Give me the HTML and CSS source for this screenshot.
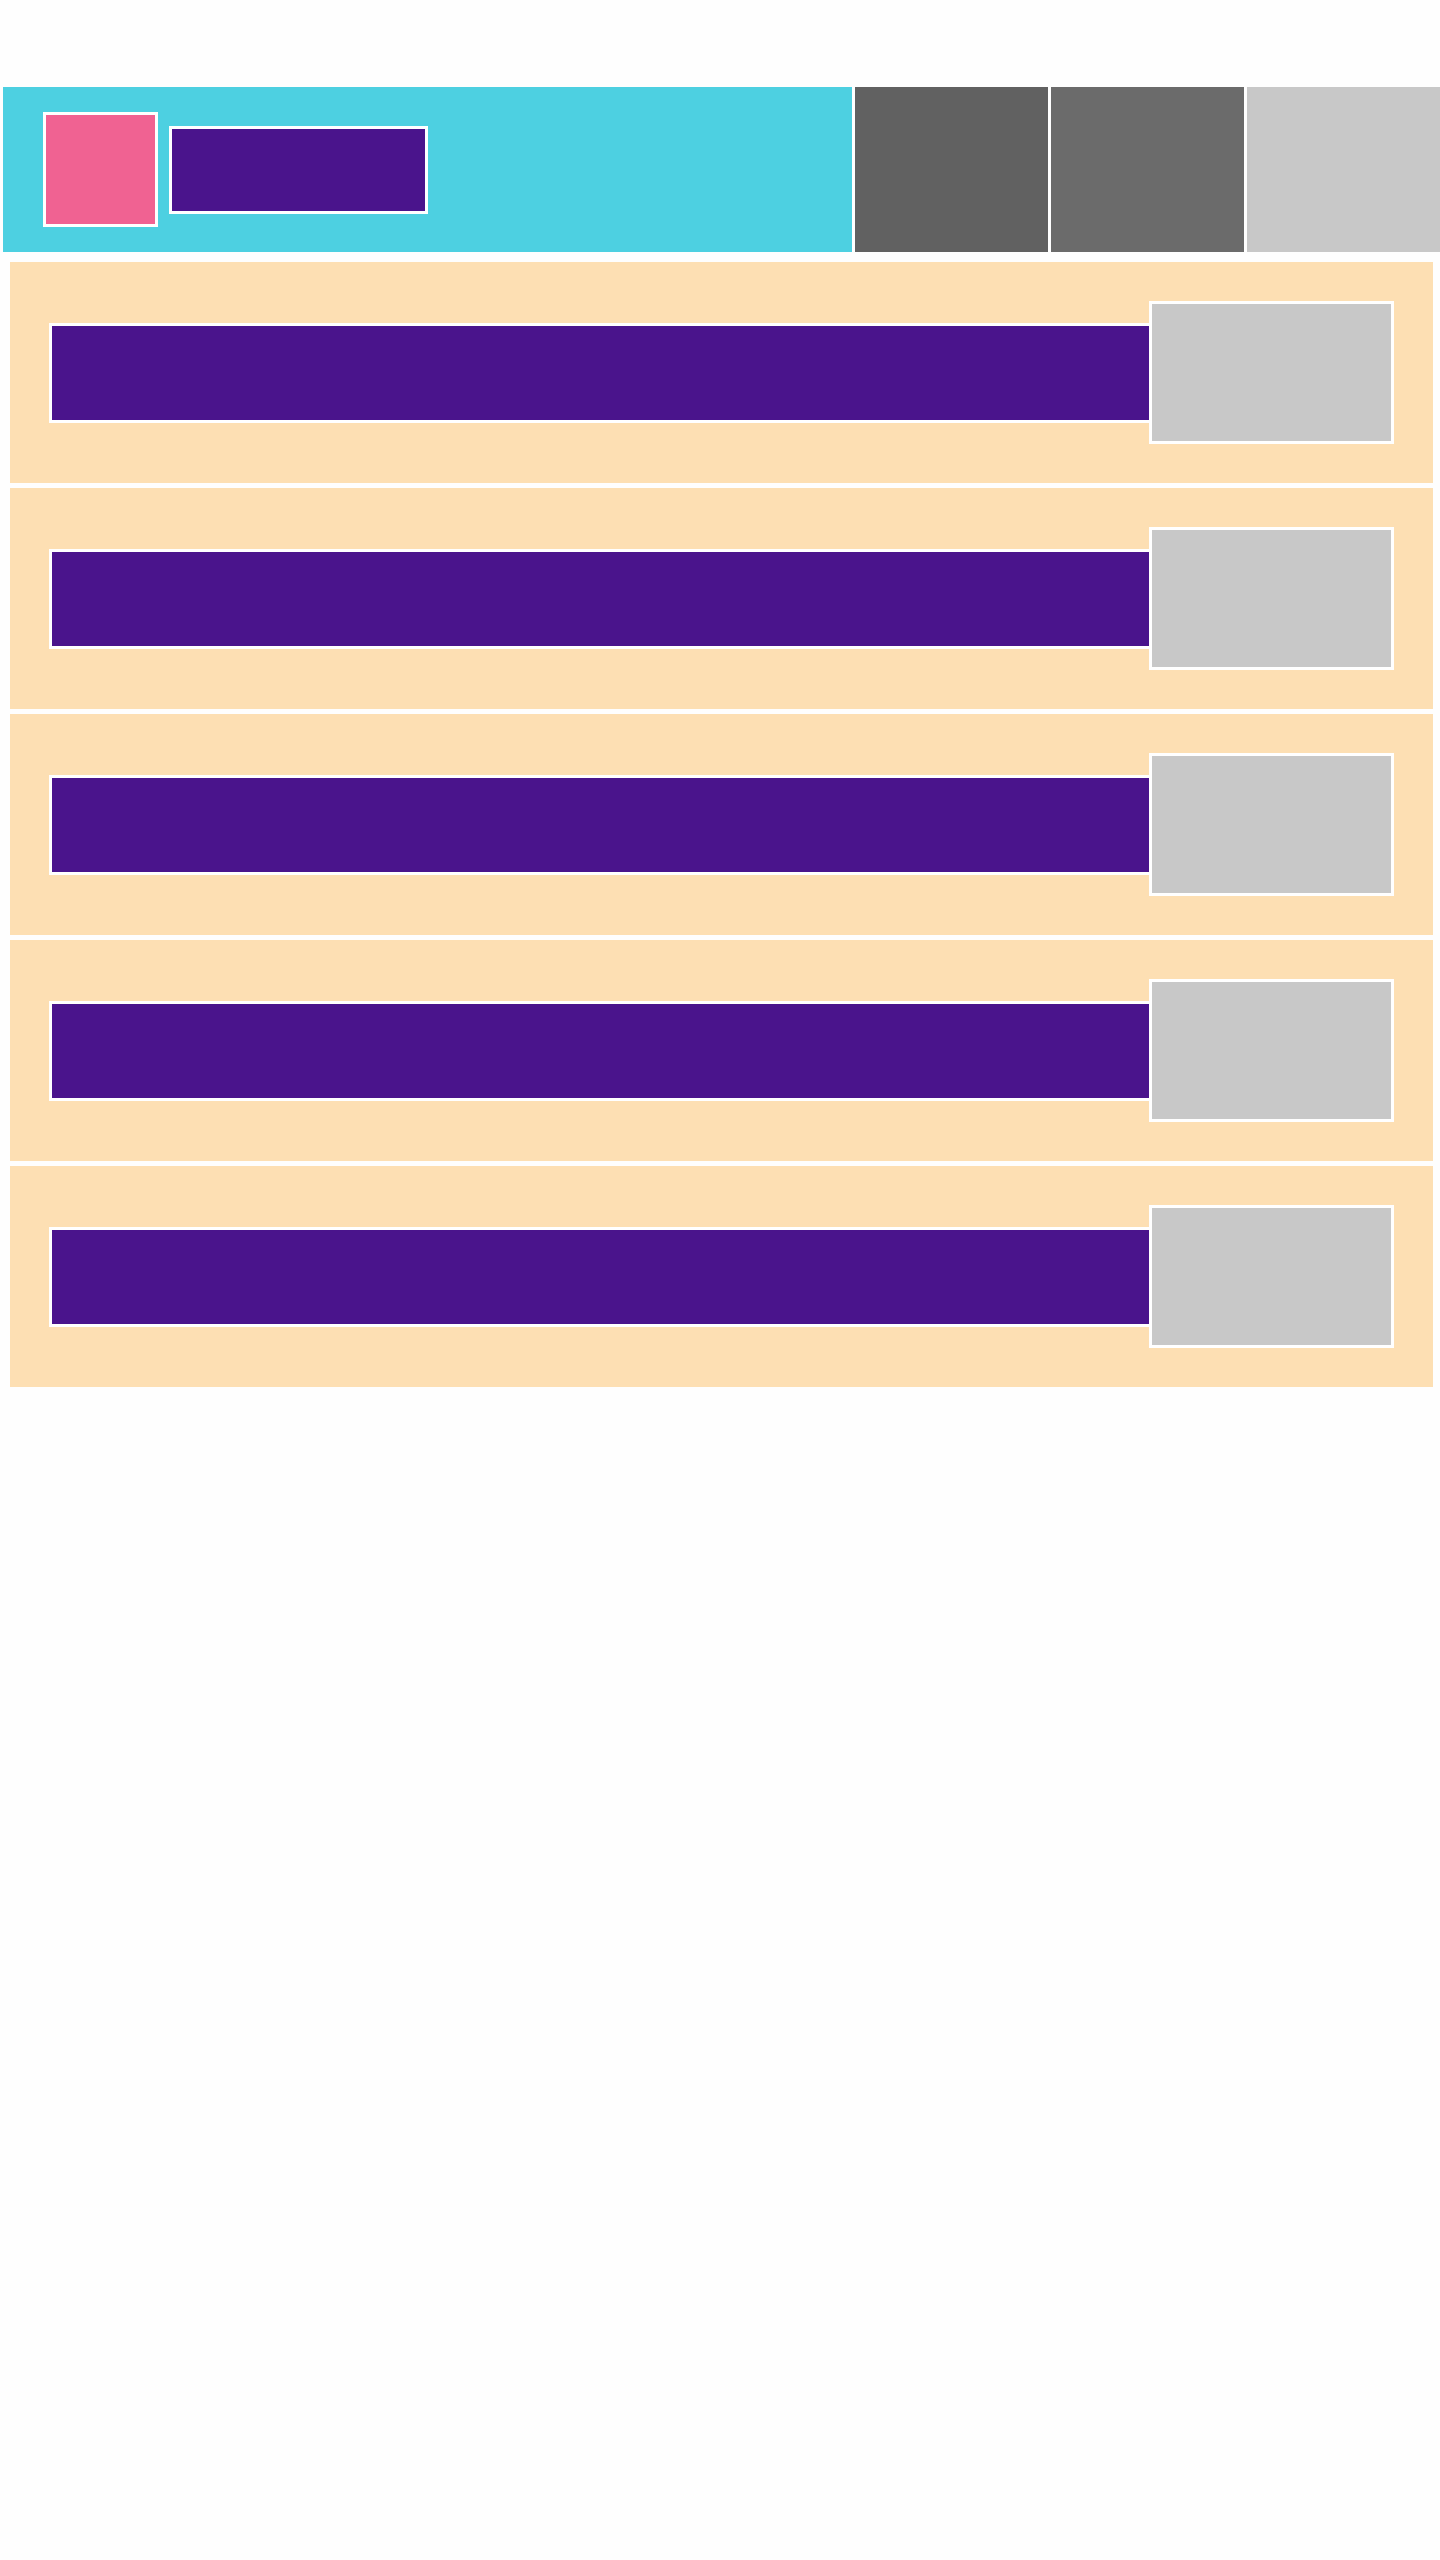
FILE: index.html
```html
<!DOCTYPE html>
<html lang="en">
<head>
  <meta charset="UTF-8" />
  <meta name="viewport" content="width=device-width, initial-scale=1.0" />
  <title>List</title>
  <link rel="stylesheet" href="styles.css">
</head>
<body>
  <header class="topbar">
    <div class="brand">
      <div class="logo"></div>
      <div class="title"></div>
    </div>
    <div class="tab tab-dark"></div>
    <div class="tab tab-mid"></div>
    <div class="tab tab-light"></div>
  </header>

  <main class="list">
    <div class="row">
      <div class="bar"></div>
      <div class="thumb"></div>
    </div>
    <div class="row">
      <div class="bar"></div>
      <div class="thumb"></div>
    </div>
    <div class="row">
      <div class="bar"></div>
      <div class="thumb"></div>
    </div>
    <div class="row">
      <div class="bar"></div>
      <div class="thumb"></div>
    </div>
    <div class="row">
      <div class="bar"></div>
      <div class="thumb"></div>
    </div>
  </main>
</body>
</html>
```

FILE: styles.css
```css
body {
  margin: 0;
  background: #fefefe;
  font-family: "Liberation Sans", Arial, sans-serif;
}

.topbar {
  display: flex;
  height: 165px;
  margin: 87px 0 0 3px;
  background: #ffffff;
}

.brand {
  flex: 1;
  display: flex;
  align-items: center;
  gap: 11px;
  padding-left: 40px;
  background: #4dd0e1;
}

.logo {
  width: 109px;
  height: 109px;
  background: #f06292;
  border: 3px solid #ffffff;
}

.title {
  width: 253px;
  height: 82px;
  background: #4a148c;
  border: 3px solid #ffffff;
}

.tab {
  flex-shrink: 0;
  width: 193px;
  margin-left: 3px;
}

.tab-dark {
  background: #616161;
}

.tab-mid {
  background: #6b6b6b;
}

.tab-light {
  background: #c8c8c8;
}

.list {
  display: flex;
  flex-direction: column;
  gap: 5px;
  width: 1423px;
  margin: 10px 0 0 10px;
}

.row {
  display: flex;
  align-items: center;
  height: 221px;
  padding: 0 39px;
  background: #fddfb3;
}

.bar {
  flex: 1;
  height: 94px;
  background: #4a148c;
  border: 3px solid #ffffff;
  border-right: 0;
}

.thumb {
  width: 239px;
  height: 137px;
  background: #c8c8c8;
  border: 3px solid #ffffff;
}
```
